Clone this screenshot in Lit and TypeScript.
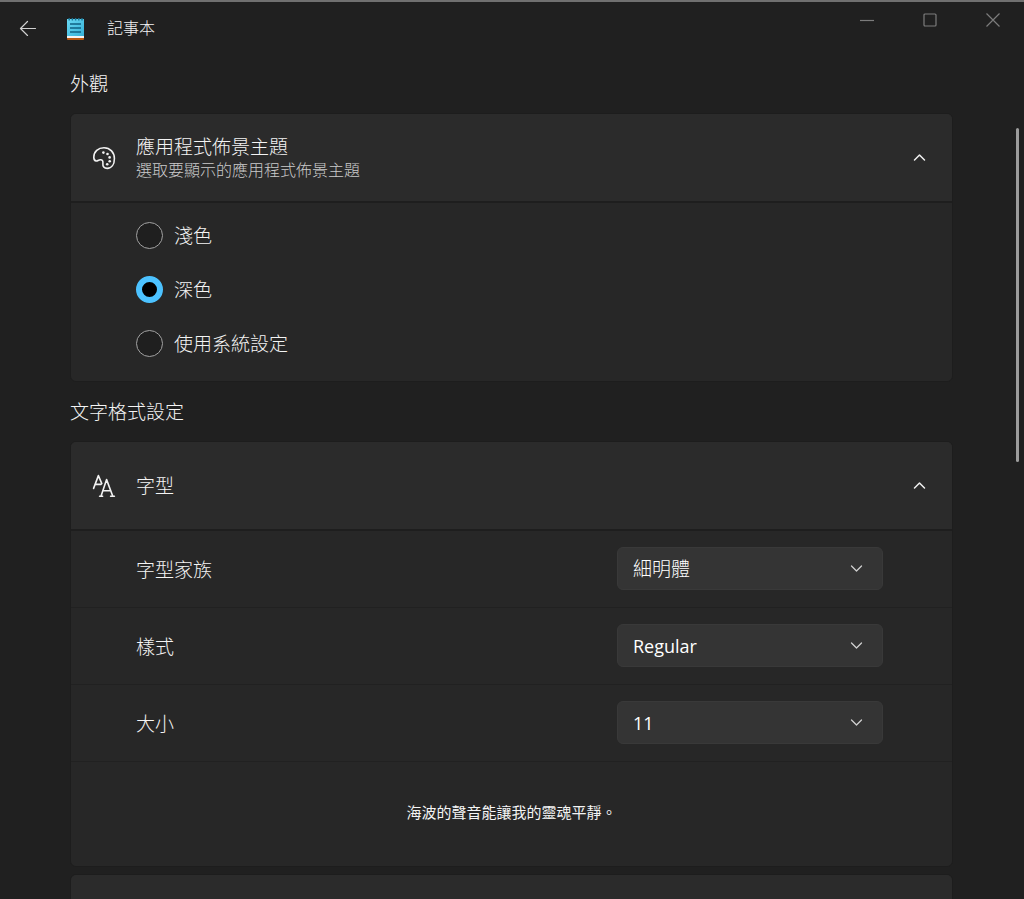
import { LitElement, html, css, svg } from "lit";
import { customElement, property, state } from "lit/decorators.js";

const chevronUp = svg`<path d="M1.5 7 L6.5 2 L11.5 7" />`;
const chevronDown = svg`<path d="M1.5 2 L6.5 7 L11.5 2" />`;

@customElement("settings-card")
export class SettingsCard extends LitElement {
  @property() heading = "";
  @property() description = "";
  @property({ type: Boolean }) open = false;

  static styles = css`
    :host {
      display: block;
      border: 1px solid #1d1d1d;
      border-radius: 6px;
      background: #272727;
      overflow: hidden;
    }
    .header {
      box-sizing: border-box;
      display: flex;
      align-items: center;
      width: 100%;
      height: 87px;
      padding: 0 26px 0 21px;
      border: 0;
      background: #2b2b2b;
      color: #f4f4f4;
      font: inherit;
      text-align: left;
    }
    .icon {
      display: flex;
      width: 24px;
      margin-right: 20px;
    }
    .texts {
      flex: 1;
      display: flex;
      flex-direction: column;
    }
    .title {
      font-size: 19px;
      line-height: 24px;
    }
    .description {
      font-size: 16px;
      line-height: 22px;
      color: #cacaca;
    }
    .chevron {
      width: 13px;
      height: 9px;
      fill: none;
      stroke: #f0f0f0;
      stroke-width: 1.5;
      stroke-linecap: round;
      stroke-linejoin: round;
    }
    .body {
      border-top: 2px solid #1e1e1e;
    }
  `;

  private toggle() {
    this.open = !this.open;
  }

  render() {
    return html`
      <button class="header" aria-expanded=${this.open} @click=${this.toggle}>
        <span class="icon"><slot name="icon"></slot></span>
        <span class="texts">
          <span class="title">${this.heading}</span>
          ${this.description
            ? html`<span class="description">${this.description}</span>`
            : null}
        </span>
        <svg class="chevron" viewBox="0 0 13 9">
          ${this.open ? chevronUp : chevronDown}
        </svg>
      </button>
      ${this.open ? html`<div class="body"><slot></slot></div>` : null}
    `;
  }
}

@customElement("app-root")
export class AppRoot extends LitElement {
  @state() private theme = "dark";

  private themes = [
    { id: "light", label: "淺色" },
    { id: "dark", label: "深色" },
    { id: "system", label: "使用系統設定" },
  ];

  private fields = [
    { id: "family", label: "字型家族", kind: "", options: ["細明體"] },
    { id: "style", label: "樣式", kind: "latin", options: ["Regular"] },
    { id: "size", label: "大小", kind: "latin", options: ["11"] },
  ];

  static styles = css`
    :host {
      box-sizing: border-box;
      position: relative;
      display: flex;
      flex-direction: column;
      height: 100vh;
      overflow: hidden;
      border-top: 2px solid #707070;
      background: #202020;
      color: #f4f4f4;
      font-family: "Noto Sans", "Noto Sans CJK TC", sans-serif;
      font-weight: 300;
    }
    .titlebar {
      flex: none;
      display: flex;
      align-items: flex-start;
      height: 52px;
    }
    .back,
    .control {
      display: flex;
      align-items: center;
      justify-content: center;
      padding: 0;
      border: 0;
      background: none;
    }
    .back {
      width: 55px;
      height: 52px;
    }
    .brand {
      flex: 1;
      display: flex;
      align-items: center;
      gap: 22px;
      height: 52px;
      padding-left: 11px;
    }
    .name {
      font-size: 16px;
      line-height: 24px;
      font-weight: 300;
      margin: 0;
    }
    .control {
      width: 63px;
      height: 36px;
    }
    .line {
      fill: none;
      stroke: #7c7c7c;
      stroke-width: 1.2;
    }
    .back .line {
      stroke: #d0d0d0;
      stroke-linecap: round;
      stroke-linejoin: round;
      stroke-width: 1.2;
    }
    .content {
      flex: 1;
      min-height: 0;
      overflow: hidden;
      padding: 0 71px 0 70px;
    }
    .section {
      margin: 0;
      height: 59px;
      font-size: 19px;
      line-height: 61px;
      font-weight: 300;
    }
    .glyph {
      width: 24px;
      height: 24px;
      fill: none;
      stroke: #f2f2f2;
      stroke-width: 1.6;
      stroke-linecap: round;
      stroke-linejoin: round;
    }
    .dot {
      fill: #f2f2f2;
      stroke: none;
    }
    .choices {
      display: flex;
      flex-direction: column;
      gap: 27px;
      margin: 0;
      padding: 19px 65px 24px;
      border: 0;
    }
    .choice {
      display: flex;
      align-items: center;
      gap: 11px;
      height: 27px;
      font-size: 19px;
    }
    .choice-text {
      padding-bottom: 2px;
    }
    .radio {
      appearance: none;
      box-sizing: border-box;
      width: 27px;
      height: 27px;
      margin: 0;
      border: 1px solid #a2a2a2;
      border-radius: 50%;
      background: #1f1f1f;
    }
    .radio:checked {
      border: 6px solid #4cc2ff;
      background: #000;
    }
    .field {
      box-sizing: border-box;
      display: flex;
      align-items: center;
      justify-content: space-between;
      height: 77px;
      padding: 0 69px 1px 65px;
      border-bottom: 1px solid #212121;
      font-size: 19px;
    }
    .combo {
      display: grid;
      align-items: center;
      width: 266px;
    }
    .select,
    .arrow {
      grid-area: 1 / 1;
    }
    .select {
      appearance: none;
      box-sizing: border-box;
      width: 100%;
      height: 43px;
      padding: 0 48px 0 15px;
      border: 1px solid #393939;
      border-radius: 6px;
      background: #343434;
      color: #fff;
      font: inherit;
    }
    .latin {
      font-family: "Open Sans", "Noto Sans CJK TC", sans-serif;
      font-size: 18px;
      font-weight: 400;
    }
    .arrow {
      justify-self: end;
      width: 13px;
      height: 9px;
      margin-right: 20px;
      fill: none;
      stroke: #cfcfcf;
      stroke-width: 1.3;
      stroke-linecap: round;
      stroke-linejoin: round;
      pointer-events: none;
    }
    .preview {
      margin: 0;
      padding: 38px 0 42px;
      font-size: 15px;
      line-height: 24px;
      font-weight: 400;
      text-align: center;
    }
    .next {
      margin-top: 7px;
    }
    .thumb {
      position: absolute;
      top: 126px;
      right: 5px;
      width: 3px;
      height: 334px;
      border-radius: 2px;
      background: #9c9c9c;
    }
  `;

  render() {
    return html`
      <header class="titlebar">
        <button class="back" aria-label="返回">
          <svg class="line" width="18" height="16" viewBox="0 0 18 16">
            <path d="M16.5 8.5 H1.5 M8.5 1.5 L1.5 8.5 L8.5 15.5" />
          </svg>
        </button>
        <div class="brand">
          <svg width="19" height="24" viewBox="0 0 19 24">
            <defs>
              <linearGradient id="paper" x1="0" y1="0" x2="1" y2="1">
                <stop offset="0" stop-color="#6ad9f3" />
                <stop offset="1" stop-color="#35b1d8" />
              </linearGradient>
            </defs>
            <rect x="1" y="20" width="17" height="4" rx="1" fill="#b8560f" />
            <rect x="1" y="19" width="17" height="3" fill="#f3f3f3" />
            <path d="M1 3 H18 V20 H1 Z" fill="url(#paper)" />
            <path
              d="M3.2 2 V4.5 M6.4 2 V4.5 M9.6 2 V4.5 M12.8 2 V4.5 M16 2 V4.5"
              stroke="#1a7595"
              stroke-width="1.4"
            />
            <path
              d="M4 8 H15 M4 12 H15 M4 16 H15"
              stroke="#0f6284"
              stroke-width="1.4"
            />
          </svg>
          <h1 class="name">記事本</h1>
        </div>
        <button class="control" aria-label="最小化">
          <svg class="line" width="14" height="14" viewBox="0 0 14 14">
            <path d="M0 7.5 H14" />
          </svg>
        </button>
        <button class="control" aria-label="最大化">
          <svg class="line" width="14" height="14" viewBox="0 0 14 14">
            <rect x="1" y="1" width="12" height="12" rx="1" />
          </svg>
        </button>
        <button class="control" aria-label="關閉">
          <svg class="line" width="14" height="14" viewBox="0 0 14 14">
            <path d="M.5 .5 L13.5 13.5 M13.5 .5 L.5 13.5" />
          </svg>
        </button>
      </header>

      <main class="content">
        <h2 class="section">外觀</h2>
        <settings-card
          open
          heading="應用程式佈景主題"
          description="選取要顯示的應用程式佈景主題"
        >
          <svg class="glyph" slot="icon" viewBox="0 0 24 24">
            <path
              d="M1.8 11.2 C1.8 5.6 6.2 1.8 12 1.8 C18.2 1.8 22.4 6.6 22.4 12.4 C22.4 18.4 19.6 22.4 15.2 22.4 C12 22.4 10.6 20.4 10.9 17.6 C11.2 15 10.4 13.6 8.4 13.7 C6.4 13.8 5.6 15.2 4.2 15 C2.4 14.8 1.8 13 1.8 11.2 Z"
            />
            <circle class="dot" cx="11.4" cy="6.6" r="1.3" />
            <circle class="dot" cx="15.5" cy="8" r="1.3" />
            <circle class="dot" cx="17.6" cy="11.4" r="1.3" />
            <circle class="dot" cx="17.7" cy="15.2" r="1.3" />
            <circle class="dot" cx="15.2" cy="18.2" r="1.3" />
          </svg>
          <fieldset class="choices" aria-label="應用程式佈景主題">
            ${this.themes.map(
              (t) => html`
                <label class="choice">
                  <input
                    class="radio"
                    type="radio"
                    name="theme"
                    .value=${t.id}
                    .checked=${this.theme === t.id}
                    @change=${() => (this.theme = t.id)}
                  />
                  <span class="choice-text">${t.label}</span>
                </label>
              `
            )}
          </fieldset>
        </settings-card>

        <h2 class="section">文字格式設定</h2>
        <settings-card open heading="字型">
          <svg class="glyph" slot="icon" viewBox="0 0 24 24">
            <path
              d="M1.6 14.4 L6.4 1.6 L9.8 9.6 M3.4 10.4 H9 M7.6 22.2 H10.6 M9 22.2 L14.6 5.6 L20.8 22.2 M18.6 22.2 H22.4 M11.2 16.8 H18.6"
            />
          </svg>
          ${this.fields.map(
            (f) => html`
              <div class="field">
                <label for=${f.id}>${f.label}</label>
                <div class="combo">
                  <select class="select ${f.kind}" id=${f.id}>
                    ${f.options.map((o) => html`<option>${o}</option>`)}
                  </select>
                  <svg class="arrow" viewBox="0 0 13 9">${chevronDown}</svg>
                </div>
              </div>
            `
          )}
          <p class="preview">海波的聲音能讓我的靈魂平靜。</p>
        </settings-card>
        <settings-card class="next"></settings-card>
      </main>
      <div class="thumb"></div>
    `;
  }
}
